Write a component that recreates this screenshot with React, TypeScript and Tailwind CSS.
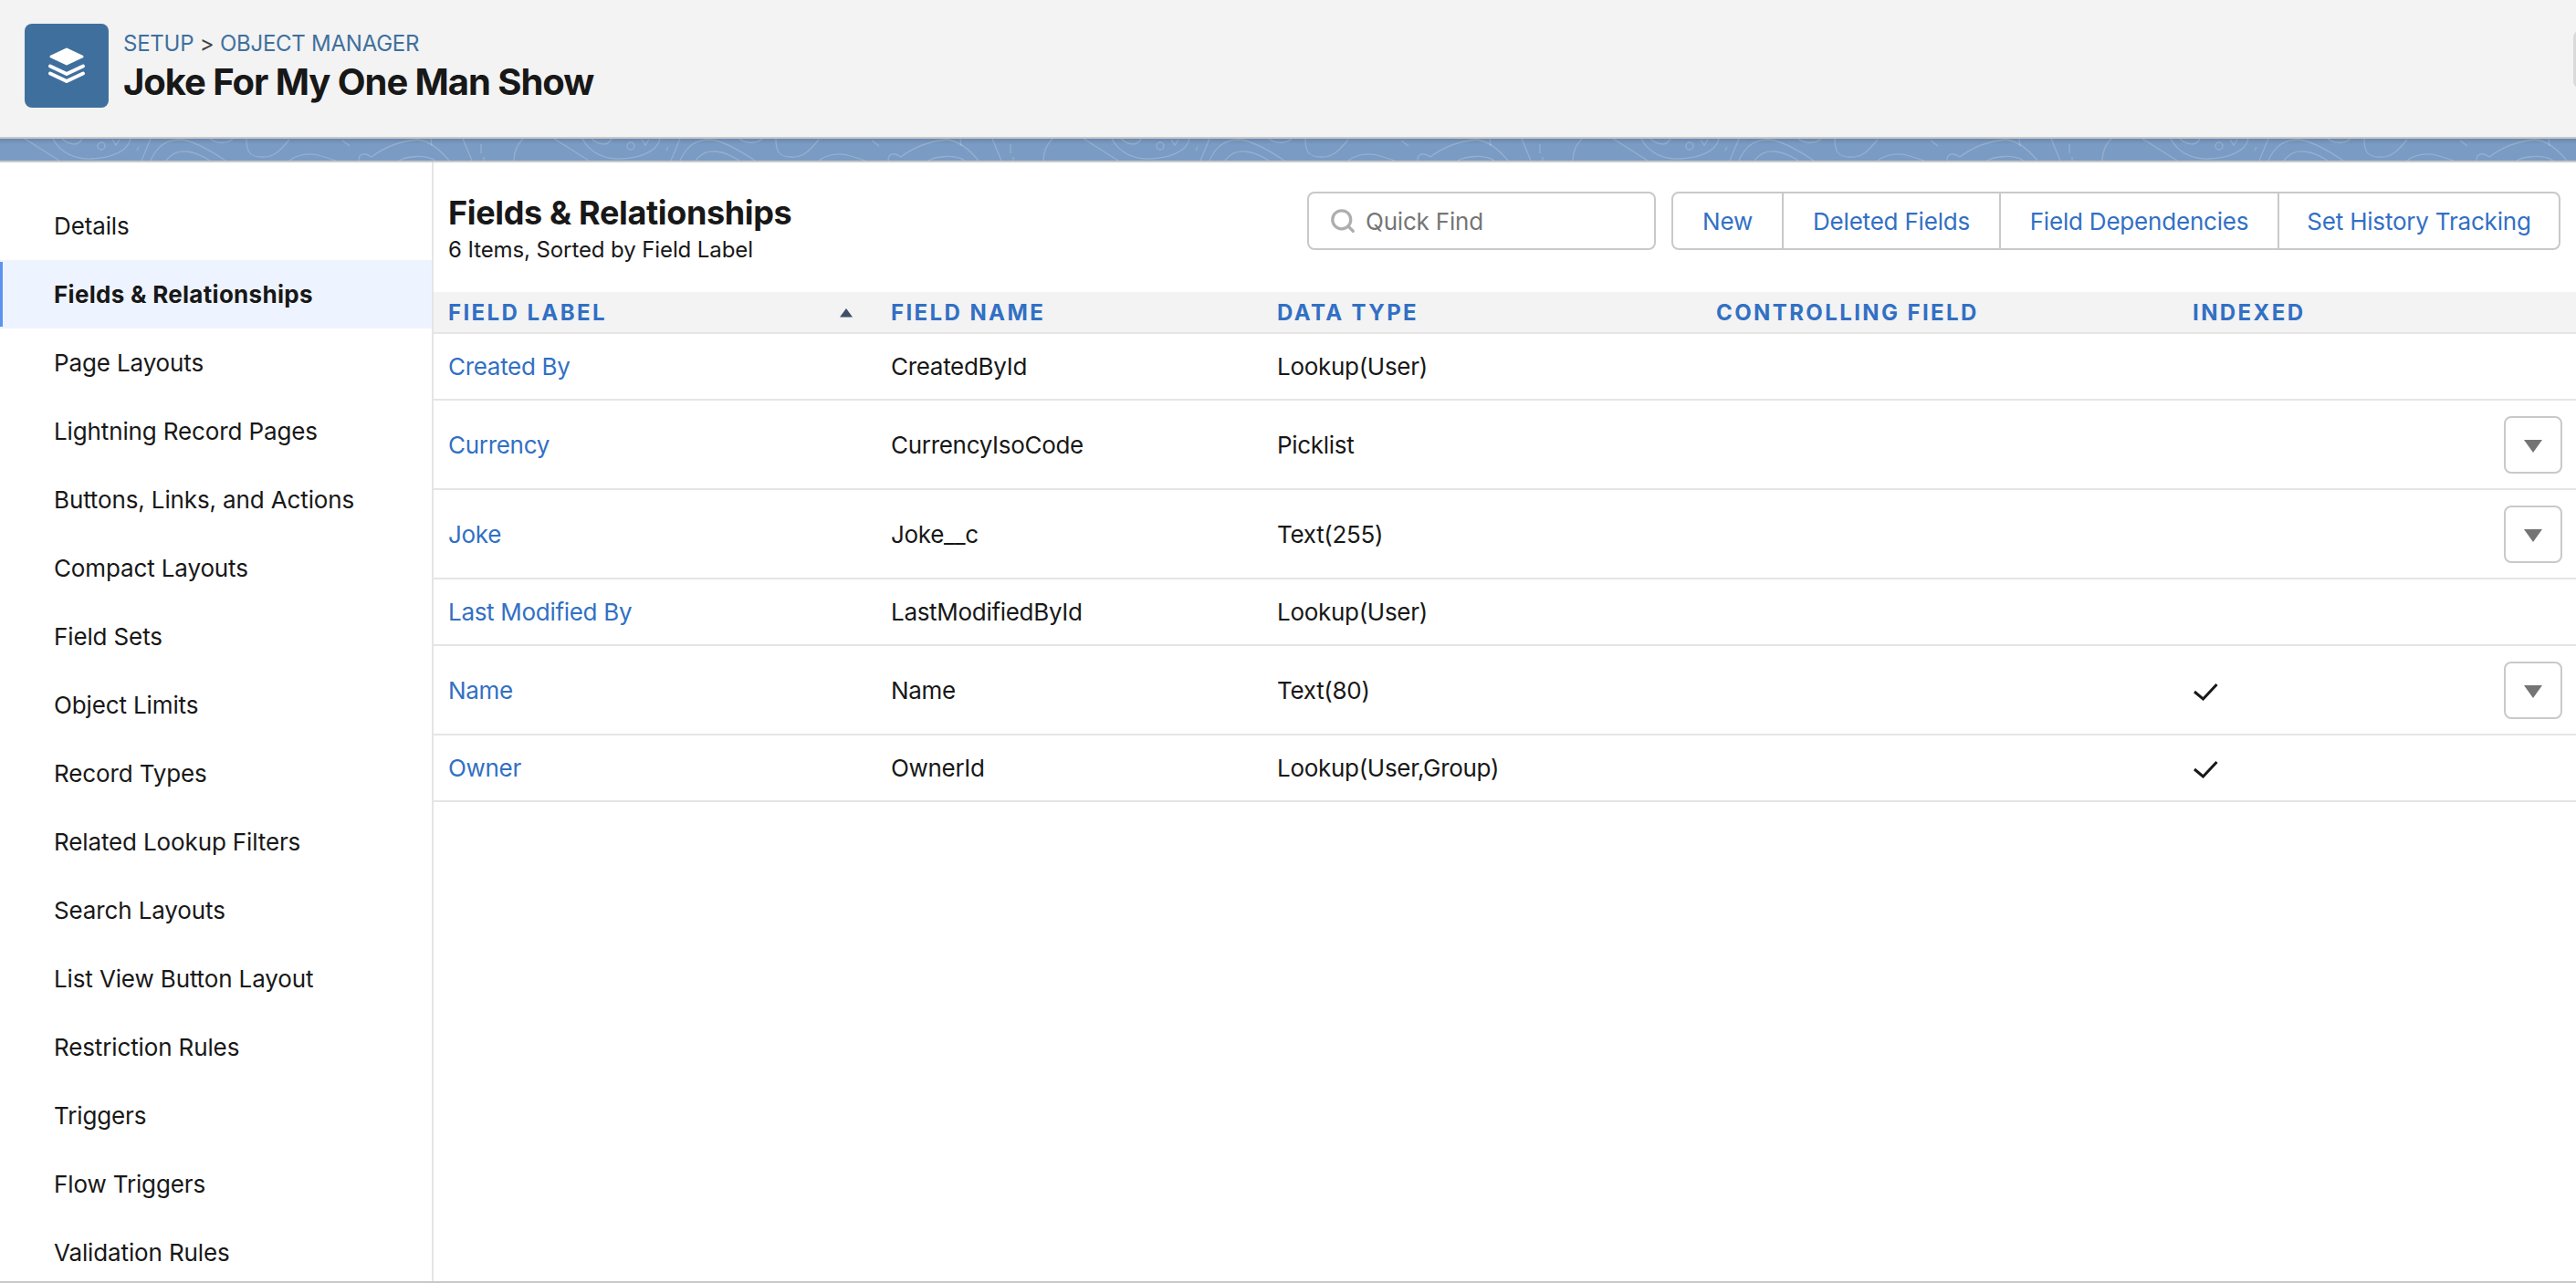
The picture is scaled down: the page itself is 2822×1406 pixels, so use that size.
import { Search } from "lucide-react";

const side = ["Details","Fields & Relationships","Page Layouts","Lightning Record Pages","Buttons, Links, and Actions","Compact Layouts","Field Sets","Object Limits","Record Types","Related Lookup Filters","Search Layouts","List View Button Layout","Restriction Rules","Triggers","Flow Triggers","Validation Rules"];

const rows = [
  { label: "Created By", name: "CreatedById", type: "Lookup(User)", indexed: false, menu: false },
  { label: "Currency", name: "CurrencyIsoCode", type: "Picklist", indexed: false, menu: true },
  { label: "Joke", name: "Joke__c", type: "Text(255)", indexed: false, menu: true },
  { label: "Last Modified By", name: "LastModifiedById", type: "Lookup(User)", indexed: false, menu: false },
  { label: "Name", name: "Name", type: "Text(80)", indexed: true, menu: true },
  { label: "Owner", name: "OwnerId", type: "Lookup(User,Group)", indexed: true, menu: false },
];

const gridCols = "grid grid-cols-[485px_423px_481px_522px_1fr] pl-[16px] pr-[15px] items-center";

function Band() {
  return (
    <svg className="block" width="2822" height="24" viewBox="0 0 2822 24">
      <defs>
        <pattern id="contour" width="580" height="24" patternUnits="userSpaceOnUse">
          <g fill="none" stroke="#ffffff" strokeOpacity="0.2" strokeWidth="1.3">
            <path d="M27 0 L65 24" />
            <path d="M58 0 C66 16 84 23 100 22 C122 21 140 14 143 0" />
            <path d="M68 0 C74 6 84 8 88 3 L90 0" />
            <circle cx="111" cy="8" r="4" />
            <path d="M123 1 L127 7 L131 1" />
            <path d="M152 9 L150 13" />
            <path d="M165 0 L155 24" />
            <path d="M165 24 C172 8 182 1 198 1 C212 2 232 14 247 24" />
            <path d="M182 24 C188 16 196 13 204 14 C214 15 224 20 230 24" />
            <path d="M230 0 C238 6 248 6 255 0" />
            <path d="M270 0 C270 12 272 20 287 20 C300 21 308 12 317 1" />
            <path d="M317 24 C326 17 340 15 352 19 L368 24" />
            <path d="M375 2 L383 8" />
            <path d="M393 24 C393 17 398 14 407 20" />
            <path d="M407 20 C420 10 436 3 457 1 C470 2 482 12 492 24" />
            <path d="M472 0 L473 8" />
            <path d="M437 24 C446 19 466 17 477 24" />
            <path d="M507 0 L517 24" />
            <path d="M527 6 L527 16" />
            <path d="M530 20 L530 24" />
            <path d="M563 24 C563 14 567 6 573 0" />
          </g>
        </pattern>
        <linearGradient id="bandShade" x1="0" y1="0" x2="0" y2="1">
          <stop offset="0" stopColor="#000000" stopOpacity="0.12" />
          <stop offset="0.25" stopColor="#000000" stopOpacity="0" />
        </linearGradient>
      </defs>
      <rect width="2822" height="24" fill="#7a9bc4" />
      <rect width="2822" height="24" fill="url(#contour)" />
      <rect width="2822" height="24" fill="url(#bandShade)" />
    </svg>
  );
}

function ObjectIcon() {
  return (
    <svg width="92" height="92" viewBox="0 0 92 92" className="block">
      <path d="M46 28 L63 36 L46 44 L29 36 Z" fill="#ffffff" stroke="#ffffff" strokeWidth="3" strokeLinejoin="round" />
      <path d="M28 46.5 L46 55 L64 46.5" fill="none" stroke="#ffffff" strokeWidth="4" strokeLinecap="round" strokeLinejoin="round" />
      <path d="M28 54.5 L46 63 L64 54.5" fill="none" stroke="#ffffff" strokeWidth="4" strokeLinecap="round" strokeLinejoin="round" />
    </svg>
  );
}

function Check() {
  return (
    <svg width="28" height="20" viewBox="0 0 28 20" className="mt-[3px] block">
      <path d="M2 10 L11.5 18 L26.5 2" fill="none" stroke="#181818" strokeWidth="3" />
    </svg>
  );
}

export default function App() {
  return (
    <div className="relative flex h-[1406px] w-[2822px] flex-col overflow-hidden bg-white font-['Inter',sans-serif] text-[26px] tracking-[-0.13px] text-[#181818]">
      <div className="flex h-[152px] shrink-0 gap-[16px] border-b-2 border-[#c9c9c9] bg-[#f3f3f3] pl-[27px] pt-[26px]">
        <div className="flex h-[92px] w-[92px] items-center justify-center rounded-[8px] bg-[#3f709d]">
          <ObjectIcon />
        </div>
        <div>
          <div className="mt-[4px] text-[24px] leading-[36px] tracking-[-0.25px] text-[#3f709d]">
            SETUP <span className="text-[#444444]">&gt;</span> OBJECT MANAGER
          </div>
          <div className="mt-[-2px] text-[40px] font-bold leading-[52px] tracking-[-1.05px]">Joke For My One Man Show</div>
        </div>
      </div>
      <div className="absolute right-[-20px] top-[33px] h-[64px] w-[23px] rounded-[8px] border-[3px] border-[#dadada] bg-[#f6f6f6]" />
      <Band />
      <div className="flex min-h-0 flex-1 border-t-2 border-[#c9c9c9]">
        <div className="w-[475px] shrink-0 overflow-hidden border-r-2 border-[#e5e5e5] pt-[32px]">
          {side.map((s, i) => (
            <div key={s} className={i === 1
              ? "relative flex h-[75px] items-center bg-[#eef4ff] pl-[59px] font-bold tracking-[0.29px]"
              : "flex h-[75px] items-center pl-[59px]"}>
              {i === 1 && <span className="absolute bottom-[2px] left-0 top-[2px] w-[3px] bg-[#5b93f0]" />}
              {s}
            </div>
          ))}
        </div>
        <div className="min-w-0 flex-1">
          <div className="flex h-[142px] justify-between pl-[16px] pr-[17px] pt-[32px]">
            <div>
              <div className="mt-[1px] text-[36px] font-bold leading-[44px] tracking-[-0.35px]">Fields &amp; Relationships</div>
              <div className="mt-[2px] text-[24px] leading-[34px] tracking-[-0.1px]">6 Items, Sorted by Field Label</div>
            </div>
            <div className="flex h-[64px] gap-[17px] tracking-[-0.2px]">
              <div className="flex w-[382px] items-center rounded-[8px] border-2 border-[#c9c9c9] pl-[22px] text-[#757575]">
                <Search size={30} strokeWidth={2.6} className="mr-[10px] text-[#aeaeae]" />
                Quick Find
              </div>
              <div className="flex rounded-[8px] border-2 border-[#c9c9c9] text-[#3270c4]">
                <div className="flex w-[119px] items-center justify-center">New</div>
                <div className="flex w-[238px] items-center justify-center border-l-2 border-[#c9c9c9]">Deleted Fields</div>
                <div className="flex w-[305px] items-center justify-center border-l-2 border-[#c9c9c9]">Field Dependencies</div>
                <div className="flex w-[308px] items-center justify-center border-l-2 border-[#c9c9c9]">Set History Tracking</div>
              </div>
            </div>
          </div>
          <div className={`${gridCols} h-[46px] border-b-2 border-[#e5e5e5] bg-[#f3f3f3] pt-[1px] text-[24px] font-bold tracking-[2.4px] text-[#3270c4]`}>
            <div className="flex items-center justify-between pr-[42px]">
              FIELD LABEL
              <svg width="14" height="10" viewBox="0 0 14 10" className="block"><path d="M7 0 L14 9.5 L0 9.5 Z" fill="#3e4f68" /></svg>
            </div>
            <div>FIELD NAME</div>
            <div>DATA TYPE</div>
            <div>CONTROLLING FIELD</div>
            <div>INDEXED</div>
          </div>
          {rows.map((r) => (
            <div key={r.label} className={`${gridCols} border-b-2 border-[#e5e5e5] tracking-[-0.3px] ${r.menu ? "h-[98px]" : "h-[73px]"}`}>
              <div className="text-[#3270c4]">{r.label}</div>
              <div>{r.name}</div>
              <div>{r.type}</div>
              <div />
              <div className="flex items-center justify-between">
                {r.indexed ? <Check /> : <span />}
                {r.menu && (
                  <div className="flex h-[63px] w-[64px] items-center justify-center rounded-[8px] border-2 border-[#c9c9c9]">
                    <svg width="20" height="14" viewBox="0 0 20 14" className="mt-[4px] block"><path d="M0 0 L20 0 L10 14 Z" fill="#747474" /></svg>
                  </div>
                )}
              </div>
            </div>
          ))}
        </div>
      </div>
      <div className="h-[2px] shrink-0 bg-[#c9c9c9]" />
    </div>
  );
}
